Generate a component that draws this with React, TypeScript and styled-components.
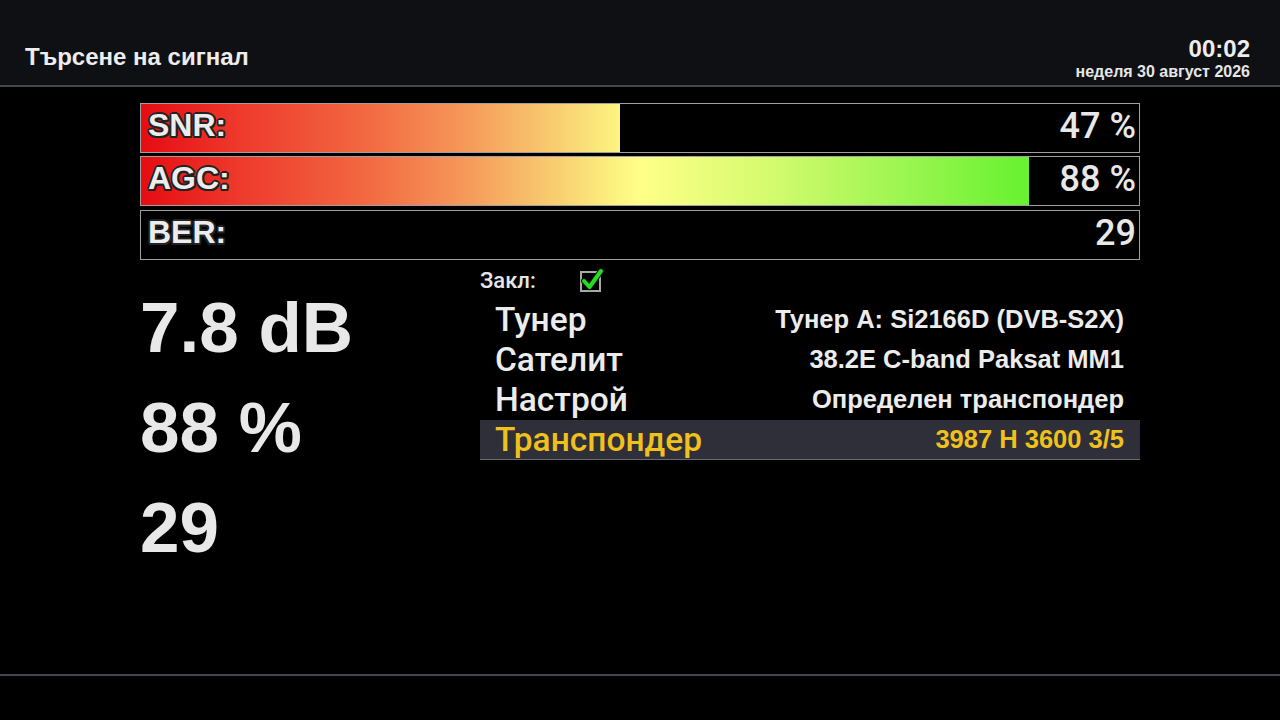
import React from 'react';
import styled, { createGlobalStyle } from 'styled-components';

const GlobalStyle = createGlobalStyle`
  html, body {
    margin: 0;
    padding: 0;
    background: #000;
  }
  body {
    width: 1280px;
    height: 720px;
    overflow: hidden;
    font-family: 'Liberation Sans', Arial, sans-serif;
    color: #e8e8e8;
  }
`;

const Screen = styled.div`
  width: 1280px;
  height: 720px;
  display: flex;
  flex-direction: column;
  background: #000;
`;

const Header = styled.header`
  height: 87px;
  flex-shrink: 0;
  box-sizing: border-box;
  background: #0f1014;
  border-bottom: 2px solid #45454d;
  display: flex;
  justify-content: space-between;
  align-items: flex-end;
  padding: 0 30px 5px 25px;
`;

const Title = styled.h1`
  margin: 0 0 9px 0;
  font-size: 24px;
  font-weight: bold;
  color: #ededed;
`;

const Clock = styled.div`
  display: flex;
  flex-direction: column;
  align-items: flex-end;
  line-height: 1;
`;

const Time = styled.div`
  font-size: 24px;
  font-weight: bold;
  color: #ededed;
  margin-bottom: 3px;
`;

const DateText = styled.div`
  font-size: 16px;
  font-weight: bold;
  color: #e6e6e6;
`;

const Main = styled.main`
  flex: 1;
  padding: 16px 140px 0 140px;
  display: flex;
  flex-direction: column;
`;

const Bars = styled.div`
  display: flex;
  flex-direction: column;
  gap: 3px;
`;

const Bar = styled.div<{ $gapTop?: number }>`
  position: relative;
  height: 50px;
  box-sizing: border-box;
  border: 1px solid #a0a0a0;
  background: #000;
  margin-top: ${p => p.$gapTop ?? 0}px;
  display: flex;
  align-items: center;
  justify-content: space-between;
  padding: 0 3px 5px 7px;
`;

const Fill = styled.div`
  position: absolute;
  left: 0;
  top: 0;
  bottom: 0;
  background-image: linear-gradient(
    90deg,
    #e60c12 0%,
    #ee3a2c 10%,
    #f26640 22%,
    #f59658 32%,
    #f8c46c 40%,
    #fbef7e 47%,
    #ffff88 50%,
    #d8fb70 62%,
    #a2f654 75%,
    #6af232 88%,
    #55ee22 100%
  );
  background-repeat: no-repeat;
`;

const BarLabel = styled.span`
  position: relative;
  font-size: 32px;
  font-weight: bold;
  color: #ececec;
  text-shadow:
    -1.5px -1.5px 0 #222, 1.5px -1.5px 0 #222,
    -1.5px 1.5px 0 #222, 1.5px 1.5px 0 #222,
    0 2px 0 #222, 0 -2px 0 #222, 2px 0 0 #222, -2px 0 0 #222;
`;

const BarValue = styled.span`
  position: relative;
  font-family: Roboto, 'Liberation Sans', sans-serif;
  font-weight: 500;
  font-size: 36px;
  color: #e8e8e8;
`;

const Lower = styled.div`
  display: flex;
  margin-top: 6px;
`;

const BigColumn = styled.div`
  width: 340px;
  display: flex;
  flex-direction: column;
  padding-top: 22px;
`;

const BigValue = styled.div`
  font-size: 71px;
  font-weight: bold;
  color: #e8e8e8;
  height: 100px;
  line-height: 80px;
`;

const InfoColumn = styled.div`
  flex: 1;
  display: flex;
  flex-direction: column;
`;

const LockRow = styled.div`
  display: flex;
  align-items: center;
  height: 28px;
  margin-bottom: 6px;
`;

const LockLabel = styled.span`
  font-family: Roboto, 'Liberation Sans', sans-serif;
  font-size: 22px;
  font-weight: 500;
  color: #e6e6e6;
  width: 100px;
`;

const Row = styled.div<{ $active?: boolean }>`
  height: 40px;
  box-sizing: border-box;
  display: flex;
  align-items: center;
  justify-content: space-between;
  padding: 0 16px 0 15px;
  background: ${p => (p.$active ? '#2e2f38' : 'transparent')};
  border-bottom: 1px solid ${p => (p.$active ? '#6a6a72' : 'transparent')};
  color: ${p => (p.$active ? '#f0c01c' : '#ececec')};
`;

const RowLabel = styled.span`
  font-family: Roboto, 'Liberation Sans', sans-serif;
  font-weight: 500;
  font-size: 33.5px;
`;

const RowValue = styled.span`
  font-family: 'Liberation Sans', sans-serif;
  font-weight: bold;
  font-size: 25.5px;
`;

const Footer = styled.footer`
  height: 44px;
  flex-shrink: 0;
  border-top: 2px solid #45454d;
`;

const CheckIcon = () => (
  <svg width="24" height="24" viewBox="0 0 24 24">
    <rect x="1" y="4" width="19" height="19" fill="none" stroke="#a8a8a8" strokeWidth="2" />
    <path d="M4 13 L9.5 19 L21 3" fill="none" stroke="#111" strokeWidth="6" strokeLinecap="round" strokeLinejoin="round" />
    <path d="M4 13 L9.5 19 L21 3" fill="none" stroke="#22dd22" strokeWidth="4" strokeLinecap="round" strokeLinejoin="round" />
  </svg>
);

interface Meter {
  label: string;
  value: string;
  percent: number;
  gapTop?: number;
}

const meters: Meter[] = [
  { label: 'SNR:', value: '47 %', percent: 48 },
  { label: 'AGC:', value: '88 %', percent: 89 },
  { label: 'BER:', value: '29', percent: 0, gapTop: 1 },
];

const rows = [
  { label: 'Тунер', value: 'Тунер A: Si2166D (DVB-S2X)' },
  { label: 'Сателит', value: '38.2E C-band Paksat MM1' },
  { label: 'Настрой', value: 'Определен транспондер' },
  { label: 'Транспондер', value: '3987 H 3600 3/5', active: true },
];

const App: React.FC = () => {
  return (
    <>
      <GlobalStyle />
      <Screen>
        <Header>
          <Title>Търсене на сигнал</Title>
          <Clock>
            <Time>00:02</Time>
            <DateText>неделя 30 август 2026</DateText>
          </Clock>
        </Header>
        <Main>
          <Bars>
            {meters.map(m => (
              <Bar key={m.label} $gapTop={m.gapTop}>
                {m.percent > 0 && (
                  <Fill
                    style={{
                      width: `${m.percent}%`,
                      backgroundSize: `${10000 / m.percent}% 100%`,
                    }}
                  />
                )}
                <BarLabel>{m.label}</BarLabel>
                <BarValue>{m.value}</BarValue>
              </Bar>
            ))}
          </Bars>
          <Lower>
            <BigColumn>
              <BigValue>7.8 dB</BigValue>
              <BigValue>88 %</BigValue>
              <BigValue>29</BigValue>
            </BigColumn>
            <InfoColumn>
              <LockRow>
                <LockLabel>Закл:</LockLabel>
                <CheckIcon />
              </LockRow>
              {rows.map(r => (
                <Row key={r.label} $active={r.active}>
                  <RowLabel>{r.label}</RowLabel>
                  <RowValue>{r.value}</RowValue>
                </Row>
              ))}
            </InfoColumn>
          </Lower>
        </Main>
        <Footer />
      </Screen>
    </>
  );
};

export default App;
